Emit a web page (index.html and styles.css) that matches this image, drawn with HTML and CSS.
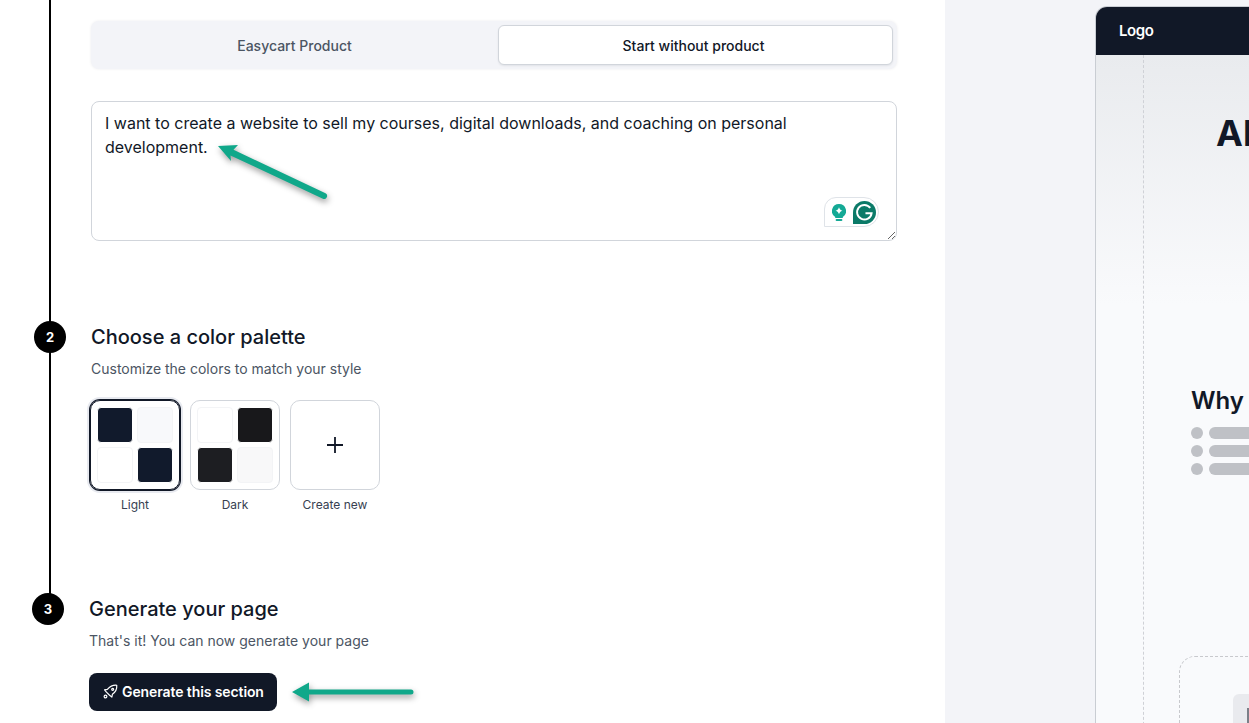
FILE: index.html
```html
<!DOCTYPE html>
<html lang="en">

<head>
    <meta charset="UTF-8">
    <title>Generate your page</title>
    <link rel="stylesheet" href="styles.css">
</head>

<body>
    <main class="builder">
        <div class="timeline"></div>

        <section class="prompt">
            <div class="tabs">
                <button class="tab">Easycart Product</button>
                <button class="tab tab-active">Start without product</button>
            </div>
            <div class="prompt-box">
                <textarea class="prompt-input">I want to create a website to sell my courses, digital downloads, and coaching on personal development.</textarea>
                <div class="grammarly">
                    <svg width="14" height="17" viewBox="0 0 14 17">
                        <path fill="#14a995" d="M7 0a7 7 0 0 0-3.800 12.900V14h7.600v-1.100A7 7 0 0 0 7 0z"/>
                        <rect x="3.600" y="15" width="6.800" height="2" rx="1" fill="#14a995"/>
                        <path fill="#fff" d="M7 3.200C7.600 5 8.500 6 10.400 6.700 8.500 7.400 7.600 8.400 7 10.200 6.400 8.400 5.500 7.400 3.600 6.700 5.500 6 6.400 5 7 3.200z"/>
                    </svg>
                    <svg width="23" height="23" viewBox="0 0 24 24">
                        <path fill="#0b7a68" d="M12 0a12 12 0 0 1 0 24H0V12A12 12 0 0 1 12 0z"/>
                        <path fill="none" stroke="#fff" stroke-width="2" d="M18 7.200A7.600 7.600 0 1 0 19.400 12.800H13"/>
                    </svg>
                </div>
                <svg class="arrow arrow-prompt" width="120" height="66" viewBox="0 0 120 66">
                    <path fill="#10a88a" d="M4 2L24 1l-4.500 4.800 92 43.500a3 3 0 0 1-2.600 5.400L16.500 11.400 17 17z"/>
                </svg>
            </div>
        </section>

        <section class="step step-palette">
            <div class="step-num">2</div>
            <h2 class="step-title">Choose a color palette</h2>
            <div class="step-body">
                <p class="step-text">Customize the colors to match your style</p>
                <div class="palettes">
                    <div class="palette-item">
                        <div class="palette palette-selected">
                            <span class="swatch navy"></span>
                            <span class="swatch mist"></span>
                            <span class="swatch white"></span>
                            <span class="swatch navy"></span>
                        </div>
                        <span class="palette-label">Light</span>
                    </div>
                    <div class="palette-item">
                        <div class="palette">
                            <span class="swatch white"></span>
                            <span class="swatch ink"></span>
                            <span class="swatch coal"></span>
                            <span class="swatch smoke"></span>
                        </div>
                        <span class="palette-label">Dark</span>
                    </div>
                    <div class="palette-item">
                        <div class="palette palette-new">
                            <svg width="18" height="18" viewBox="0 0 18 18">
                                <path d="M9 1v16M1 9h16" stroke="#111827" stroke-width="1.800" fill="none"/>
                            </svg>
                        </div>
                        <span class="palette-label">Create new</span>
                    </div>
                </div>
            </div>
        </section>

        <section class="step step-generate">
            <div class="step-num">3</div>
            <h2 class="step-title">Generate your page</h2>
            <div class="step-body">
                <p class="step-text">That's it! You can now generate your page</p>
                <div class="generate-row">
                    <button class="generate-btn">
                        <svg width="15" height="15" viewBox="0 0 24 24" fill="none" stroke="#fff" stroke-width="1.900" stroke-linejoin="round" stroke-linecap="round">
                            <path d="M22 2c.6 6-1.500 10.500-7 14.500l-.8 4.500-3.700-3-5-5-3-3.700 4.500-.8C11.500 3.500 16 1.400 22 2z"/>
                            <circle cx="15.500" cy="8.500" r="1.600"/>
                            <circle cx="4" cy="20" r="2.200"/>
                        </svg>
                        Generate this section
                    </button>
                    <svg class="arrow arrow-generate" width="122" height="24" viewBox="0 0 122 24">
                        <path fill="#10a88a" d="M0 12L17 2.500v7h102a2.500 2.500 0 0 1 0 5H17v7z"/>
                    </svg>
                </div>
            </div>
        </section>
    </main>

    <aside class="preview">
        <div class="preview-card">
            <header class="preview-header">Logo</header>
            <div class="preview-body">
                <div class="guide"></div>
                <h1 class="preview-title">Al</h1>
                <h3 class="preview-subtitle">Why</h3>
                <ul class="skeleton-list">
                    <li><i class="dot"></i><i class="bar"></i></li>
                    <li><i class="dot"></i><i class="bar"></i></li>
                    <li><i class="dot"></i><i class="bar"></i></li>
                </ul>
                <div class="dashed-box">
                    <div class="image-stub"><i></i></div>
                </div>
            </div>
        </div>
    </aside>
</body>

</html>
```

FILE: styles.css
```css
* {
    box-sizing: border-box;
}

html,
body {
    height: 723px;
    overflow: hidden;
}

body {
    margin: 0;
    display: flex;
    background: #fff;
    color: #111827;
    font-family: Inter, "Liberation Sans", sans-serif;
}

.builder {
    position: relative;
    width: 945px;
    flex-shrink: 0;
    padding-top: 21px;
    background: #fff;
}

.timeline {
    position: absolute;
    left: 49px;
    top: 0;
    width: 2px;
    height: 597px;
    background: #000;
}

.prompt {
    width: 806px;
    margin-left: 91px;
}

.tabs {
    display: grid;
    grid-template-columns: 1fr 395px;
    gap: 4px;
    padding: 4px;
    background: #f3f4f8;
    border-radius: 8px;
    box-shadow: 0 0 3px rgba(17, 24, 39, .08);
}

.tab {
    height: 40px;
    border: 1px solid transparent;
    border-radius: 6px;
    background: none;
    color: #4b5563;
    font: 500 14px Inter, sans-serif;
}

.tab-active {
    padding-right: 10px;
    background: #fff;
    border-color: #d1d5db;
    color: #111827;
    box-shadow: 0 1px 2px rgba(17, 24, 39, .08);
}

.prompt-box {
    position: relative;
    margin-top: 32px;
}

.prompt-input {
    display: block;
    width: 100%;
    height: 140px;
    padding: 9px 13px;
    border: 1px solid #d1d5db;
    border-radius: 8px;
    color: #111827;
    font: 400 16px/24px Inter, sans-serif;
    outline: none;
}

.grammarly {
    position: absolute;
    right: 18px;
    bottom: 14px;
    width: 55px;
    height: 30px;
    display: flex;
    align-items: center;
    gap: 7px;
    padding-left: 7px;
    background: #fff;
    border: 1px solid #dfe3e8;
    border-radius: 12px 15px 15px 0;
}

.arrow {
    filter: drop-shadow(1px 3px 3px rgba(0, 0, 0, .4));
}

.arrow-prompt {
    position: absolute;
    left: 123px;
    top: 43px;
}

.step {
    display: grid;
    grid-template-columns: 32px 1fr;
    column-gap: 25px;
}

.step-palette {
    margin: 80px 0 0 34px;
}

.step-generate {
    margin: 80px 0 0 32px;
}

.step-num {
    position: relative;
    width: 32px;
    height: 32px;
    border-radius: 50%;
    background: #000;
    color: #fff;
    font-size: 13px;
    font-weight: 700;
    line-height: 32px;
    text-align: center;
}

.step-title {
    margin: 0;
    font-size: 20px;
    font-weight: 500;
    line-height: 32px;
    color: #111827;
}

.step-body {
    grid-column: 2;
}

.step-text {
    margin: 6px 0 0;
    font-size: 14px;
    line-height: 20px;
    color: #4b5563;
}

.palettes {
    display: flex;
    gap: 10px;
    margin-top: 21px;
    margin-left: -1px;
}

.palette-item {
    display: flex;
    flex-direction: column;
    align-items: center;
    gap: 7px;
}

.palette {
    display: grid;
    grid-template-columns: 36px 36px;
    grid-template-rows: 36px 36px;
    gap: 4px;
    width: 90px;
    height: 90px;
    padding: 6px;
    border: 1px solid #d1d5db;
    border-radius: 10px;
}

.palette-selected {
    border-color: #111827;
    box-shadow: 0 0 0 1px #111827, 0 0 0 3px #e8eaf0;
}

.palette-new {
    display: flex;
    align-items: center;
    justify-content: center;
}

.swatch {
    border: 1px solid #f3f4f6;
    border-radius: 4px;
}

.navy {
    background: #111a2c;
    border-color: #fff;
}

.mist {
    background: #f8f9fb;
}

.white {
    background: #fff;
}

.ink {
    background: #18181b;
    border-color: #fff;
}

.coal {
    background: #1d1e22;
    border-color: #fff;
}

.smoke {
    background: #f8f8f9;
}

.palette-label {
    font-size: 12px;
    line-height: 16px;
    color: #374151;
}

.generate-row {
    display: flex;
    align-items: center;
    gap: 15px;
    margin-top: 22px;
}

.generate-btn {
    display: flex;
    align-items: center;
    gap: 4px;
    width: 188px;
    height: 38px;
    padding: 0 0 1px 14px;
    border: none;
    border-radius: 8px;
    background: #111827;
    color: #fff;
    font: 600 14px Inter, sans-serif;
    letter-spacing: -.1px;
    white-space: nowrap;
}

.preview {
    flex: 1;
    min-width: 0;
    padding: 6px 0 0 150px;
    background: #f3f4f8;
    overflow: hidden;
}

.preview-card {
    width: 500px;
    height: 800px;
    border: 1px solid #c9cdd3;
    border-bottom: none;
    border-radius: 12px 0 0 0;
    overflow: hidden;
    background: #f9fafc;
}

.preview-header {
    height: 48px;
    padding-left: 23px;
    background: #111827;
    color: #fff;
    font-size: 15px;
    font-weight: 600;
    letter-spacing: -.4px;
    line-height: 48px;
}

.preview-body {
    position: relative;
    height: 700px;
    padding: 58px 0 0 95px;
    background: linear-gradient(#e9ebee, #f9fafc 250px);
}

.guide {
    position: absolute;
    left: 47px;
    top: 0;
    bottom: 0;
    border-left: 1px dashed #cfd1d6;
}

.preview-title {
    margin: 0 0 0 25px;
    font-size: 36px;
    font-weight: 700;
    line-height: 40px;
    color: #111827;
}

.preview-subtitle {
    margin: 232px 0 0;
    font-size: 24px;
    font-weight: 600;
    line-height: 32px;
    color: #111827;
}

.skeleton-list {
    display: flex;
    flex-direction: column;
    gap: 6px;
    margin: 10px 0 0;
    padding: 0;
    list-style: none;
}

.skeleton-list li {
    display: flex;
    gap: 6px;
}

.dot {
    width: 12px;
    height: 12px;
    border-radius: 50%;
    background: #bfc1c6;
}

.bar {
    width: 200px;
    height: 12px;
    border-radius: 6px;
    background: #bfc1c6;
}

.dashed-box {
    width: 300px;
    height: 200px;
    margin: 181px 0 0 -12px;
    padding: 37px 0 0 53px;
    border: 1px dashed #c8c9cd;
    border-radius: 16px;
}

.image-stub {
    width: 80px;
    height: 80px;
    padding: 14px 0 0 14px;
    border-radius: 6px;
    background: #e9eaee;
}

.image-stub i {
    display: block;
    width: 10px;
    height: 20px;
    background: #7b7f88;
}
```
